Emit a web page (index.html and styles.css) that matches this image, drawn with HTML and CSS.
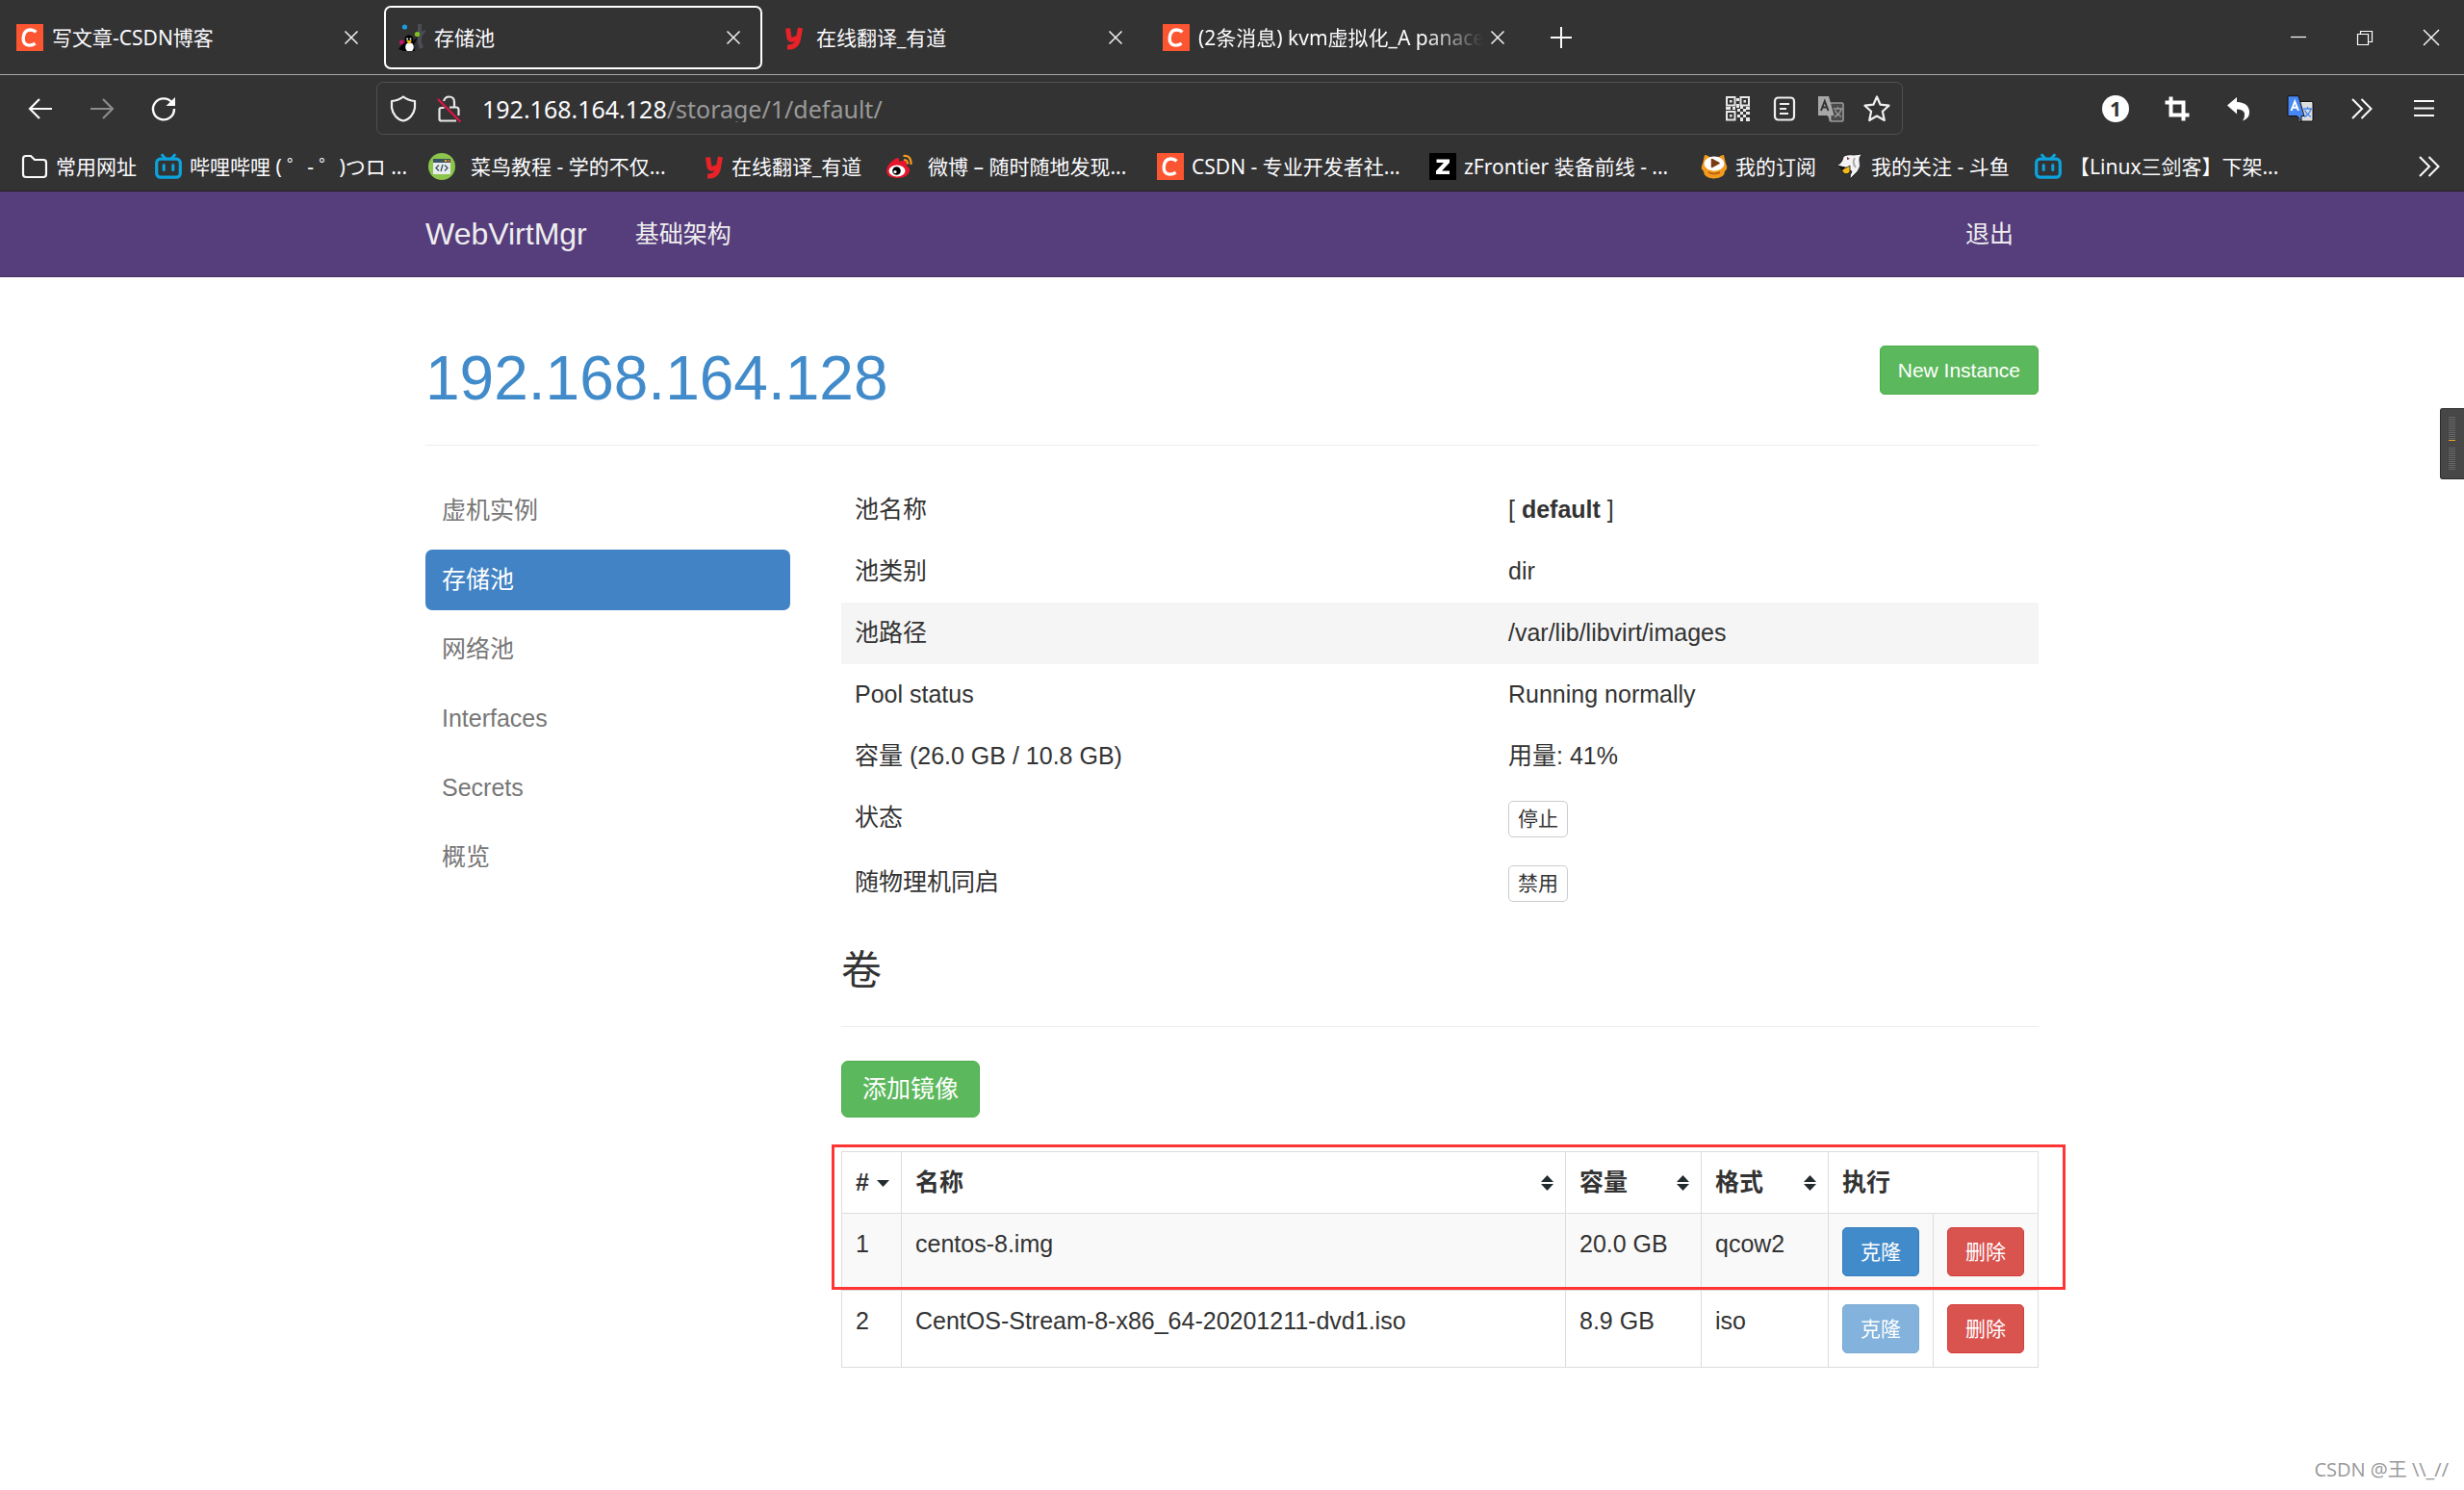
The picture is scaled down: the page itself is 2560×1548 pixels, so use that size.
FILE: index.html
```html
<!DOCTYPE html>
<html lang="zh-CN">
<head>
<meta charset="utf-8">
<meta name="viewport" content="width=device-width, initial-scale=1">
<title>存储池</title>
<link rel="stylesheet" href="styles.css">
</head>
<body>
<svg class="sprite" aria-hidden="true">
  <symbol id="i-csdn" viewBox="0 0 28 28"><rect width="28" height="28" fill="#fc5531"/><path d="M20.500 8.200C18.500 6.500 16.300 5.800 14 6C10 6.300 7.600 9.800 7.200 14.300C6.800 19.200 9.300 22 13.200 22.100C15.700 22.200 17.700 21.500 19.600 20.200" fill="none" stroke="#fff" stroke-width="3.400"/></symbol>
  <symbol id="i-youdao" viewBox="0 0 28 28"><path d="M7.500 4.500L9 14.500Q9.500 17 13.500 16L18 14M20.500 4L18.500 15Q17 24.500 7 24" fill="none" stroke="#e92228" stroke-width="5"/></symbol>
  <symbol id="i-close" viewBox="0 0 28 28"><path d="M7.500 7.500L20.500 20.500M20.500 7.500L7.500 20.500" fill="none" stroke="#f2f2f2" stroke-width="1.500"/></symbol>
  <symbol id="i-bili" viewBox="0 0 28 28"><path d="M7.500 2L11 6M20.500 2L17 6" stroke="#0ca4de" stroke-width="2.800" stroke-linecap="round"/><rect x="1.700" y="6.200" width="24.600" height="19" rx="4" fill="none" stroke="#0ca4de" stroke-width="3.200"/><path d="M9.200 12.500v5M18.800 12.500v5" stroke="#0ca4de" stroke-width="3" stroke-linecap="round"/></symbol>
  <symbol id="i-more" viewBox="0 0 28 28"><path d="M4 4L14 14L4 24M13.500 4L23.500 14L13.500 24" fill="none" stroke="#fbfbfe" stroke-width="2"/></symbol>
</svg>

<header class="browser">
  <div class="tabs" role="tablist">
    <div class="tab" role="tab">
      <svg class="ico"><use href="#i-csdn"/></svg><span class="tab-title">写文章-CSDN博客</span>
      <button class="icon-btn" aria-label="关闭"><svg class="ico"><use href="#i-close"/></svg></button>
    </div>
    <div class="tab active" role="tab" aria-selected="true">
      <svg class="ico" viewBox="0 0 28 28"><path d="M20 0h4v8l4-2v2l-4 5v6l2 5-4 2-2-6z" fill="#4b4c58"/><circle cx="6.500" cy="3" r="2.600" fill="#1b9ddb"/><circle cx="19.500" cy="10.500" r="2.600" fill="#7fc41c"/><circle cx="3.500" cy="19" r="2.600" fill="#c3146b"/><ellipse cx="11" cy="16" rx="4.500" ry="4.500" fill="#000"/><path d="M4 21L8 18H15L20 13L16 22L17 28H5L0 26Z" fill="#050505"/><ellipse cx="11.500" cy="24" rx="4.300" ry="4.800" fill="#fff"/><circle cx="9.200" cy="15.500" r="1" fill="#fff"/><circle cx="12.500" cy="15.500" r="1" fill="#fff"/><path d="M8 17h6l-3 4z" fill="#f5c20d"/></svg><span class="tab-title">存储池</span>
      <button class="icon-btn" aria-label="关闭"><svg class="ico"><use href="#i-close"/></svg></button>
    </div>
    <div class="tab" role="tab">
      <svg class="ico"><use href="#i-youdao"/></svg><span class="tab-title">在线翻译_有道</span>
      <button class="icon-btn" aria-label="关闭"><svg class="ico"><use href="#i-close"/></svg></button>
    </div>
    <div class="tab" role="tab">
      <svg class="ico"><use href="#i-csdn"/></svg><span class="tab-title fade">(2条消息) kvm虚拟化_A panace</span>
      <button class="icon-btn" aria-label="关闭"><svg class="ico"><use href="#i-close"/></svg></button>
    </div>
    <button class="icon-btn new-tab" aria-label="新建标签页"><svg class="ico" viewBox="0 0 28 28"><path d="M14 3v22M3 14h22" stroke="#fbfbfe" stroke-width="2"/></svg></button>
    <div class="window-btns">
      <button class="icon-btn" aria-label="最小化"><svg class="ico" viewBox="0 0 28 28"><path d="M6 13.500h16" stroke="#fff" stroke-width="1.200"/></svg></button>
      <button class="icon-btn" aria-label="还原"><svg class="ico" viewBox="0 0 28 28"><path d="M6.500 10.500h11v11h-11zM9.500 10V7.500h12v11H18" fill="none" stroke="#fff" stroke-width="1.200"/></svg></button>
      <button class="icon-btn" aria-label="关闭窗口"><svg class="ico" viewBox="0 0 28 28"><path d="M6 6L22 22M22 6L6 22" stroke="#fff" stroke-width="1.400"/></svg></button>
    </div>
  </div>

  <div class="toolbar">
    <div class="tool-group">
      <button class="icon-btn" aria-label="后退"><svg class="ico" viewBox="0 0 28 28"><path d="M26 14H3M13 4L3 14L13 24" fill="none" stroke="#fbfbfe" stroke-width="2.200"/></svg></button>
      <button class="icon-btn" aria-label="前进"><svg class="ico" viewBox="0 0 28 28"><path d="M2 14H25M15 4L25 14L15 24" fill="none" stroke="#8c8c8d" stroke-width="2.200"/></svg></button>
      <button class="icon-btn" aria-label="刷新"><svg class="ico" viewBox="0 0 28 28"><path d="M23 8A11 11 0 1 0 25 14" fill="none" stroke="#fbfbfe" stroke-width="2.400"/><path d="M26 2V11H16.500Z" fill="#fbfbfe"/></svg></button>
    </div>
    <div class="urlbar">
      <svg class="ico" viewBox="0 0 28 28"><path d="M14 1.500C17 4 21 5.500 26 6V13C25 20 20 25.500 14 26.500C8 25.500 3 20 2 13V6C7 5.500 11 4 14 1.500Z" fill="none" stroke="#f0f0f0" stroke-width="2.200" stroke-linejoin="round"/></svg>
      <svg class="ico" viewBox="0 0 28 28"><path d="M8 6Q9.500 1.500 13.500 1.500Q19 1.500 19 7V12.500M8.500 13H5.500Q3.500 13 3.500 15V24.500Q3.500 26.500 5.500 26.500H21M14 12.500H21Q23.500 12.500 23.500 15V21" fill="none" stroke="#e8e8e8" stroke-width="2.200"/><path d="M2 4L25.500 27.500" stroke="#e01546" stroke-width="2.200"/></svg>
      <label class="url-text"><span>192.168.164.128</span><input type="text" value="/storage/1/default/" aria-label="地址"></label>
      <svg class="ico" viewBox="0 0 28 28"><g fill="none" stroke="#e8e8e8" stroke-width="2"><path d="M2 2h8.500v8.500H2zM16.500 2H25v8.500h-8.500zM2 17h8.500v8.500H2z"/></g><path d="M5 5h2.500v2.500H5zM19.500 5H22v2.500h-2.500zM5 20h2.500v2.500H5zM12 3h3v3h-3zM12 9h3v4h-3zM1 12h5v3H1zM8 12h3v3H8zM13 14h3v3h-3zM16 11h3v3h-3zM19 14h3v3h-3zM22 12h4v3h-4zM16 17h3v3h-3zM22 17h4v3h-4zM13 20h3v3h-3zM19 20h3v3h-3zM16 23h3v4h-3zM22 23h4v4h-4z" fill="#e8e8e8"/></svg>
      <svg class="ico" viewBox="0 0 28 28"><rect x="4" y="2.500" width="20" height="23" rx="3.500" fill="none" stroke="#f0f0f0" stroke-width="2.200"/><path d="M9 9h10M9 14h7M9 19h9" stroke="#f0f0f0" stroke-width="2.200"/></svg>
      <svg class="ico" viewBox="0 0 28 28"><rect x="13" y="8" width="14" height="19" rx="1.500" fill="#4a4a4a" stroke="#9b9b9b" stroke-width="1.600"/><path d="M17 14h9M21.500 12v2M25 14.500Q23 20 18 22.500M18.500 15.500Q20.500 20 25 22.500" fill="none" stroke="#9b9b9b" stroke-width="1.400"/><path d="M1 1H12L17.500 21H14.500V27L10.500 21H1Z" fill="#a8a8a8"/><path d="M4 16L7.800 6L11.500 16M5.500 12.500h4.500" fill="none" stroke="#333" stroke-width="2"/></svg>
      <svg class="ico" viewBox="0 0 28 28"><path d="M14 1.500L17.600 9.700L26.500 10.700L19.900 16.700L21.800 26L14 21.500L6.200 26L8.100 16.700L1.500 10.700L10.400 9.700Z" fill="none" stroke="#f0f0f0" stroke-width="2.200" stroke-linejoin="round"/></svg>
    </div>
    <div class="tool-group">
      <button class="icon-btn badge" aria-label="扩展">1</button>
      <button class="icon-btn" aria-label="截图"><svg class="ico" viewBox="0 0 28 28"><path d="M7.500 1.500V20.500H26.500M1.500 7.500H20.500V26.500" fill="none" stroke="#fff" stroke-width="4"/></svg></button>
      <button class="icon-btn" aria-label="撤销"><svg class="ico" viewBox="0 0 28 28"><path d="M2 10.500L12 2V7Q25 7.500 25 18Q25 24 18 26.500Q20.500 23 20 19Q19 14.500 12 14.500V19.500Z" fill="#fff"/></svg></button>
      <button class="icon-btn" aria-label="翻译"><svg class="ico" viewBox="0 0 28 28"><rect x="12" y="6.500" width="15" height="20.500" rx="1.500" fill="#ddd" stroke="#111"/><path d="M17 14h9M21.500 12v2M25 14.500Q23 20 18 22.500M18.500 15.500Q20.500 20 25 22.500" fill="none" stroke="#4687f3" stroke-width="1.400"/><path d="M1 1.500Q1 .700 2 .700H12L18 21.500H15V27L10.500 21.500H2Q1 21.500 1 20.500Z" fill="#4687f3" stroke="#111"/><path d="M4.500 16L8.200 6.500L12 16M6 12.700h4.500" fill="none" stroke="#fff" stroke-width="2"/></svg></button>
      <button class="icon-btn" aria-label="更多工具"><svg class="ico"><use href="#i-more"/></svg></button>
      <button class="icon-btn" aria-label="菜单"><svg class="ico" viewBox="0 0 28 28"><path d="M4 6h21M4 13.500h21M4 21h21" stroke="#fbfbfe" stroke-width="2"/></svg></button>
    </div>
  </div>

  <nav class="bookmarks" aria-label="书签">
    <a href="#"><svg class="ico" viewBox="0 0 28 28"><path d="M2 6Q2 3 5 3H10L14 7H23Q26 7 26 10V22Q26 25 23 25H5Q2 25 2 22Z" fill="none" stroke="#fbfbfe" stroke-width="2.200"/></svg>常用网址</a>
    <a href="#"><svg class="ico"><use href="#i-bili"/></svg>哔哩哔哩 ( ゜- ゜)つロ ...</a>
    <a href="#"><svg class="ico" viewBox="0 0 28 28"><circle cx="14" cy="14" r="14" fill="#8cc54b"/><rect x="5" y="6" width="18" height="16" fill="#e9edef"/><rect x="5" y="6" width="18" height="4" fill="#3b5362"/><path d="M17 7h2v2h-2z" fill="#f4b400"/><path d="M20 7h2v2h-2z" fill="#e05a40"/><path d="M11 12.500L8 15.500L11 18.500M17 12.500L20 15.500L17 18.500M15 12L13 19" fill="none" stroke="#3b5362" stroke-width="1.400"/></svg><span class="spaced">菜鸟教程 - 学的不仅...</span></a>
    <a href="#"><svg class="ico narrow" viewBox="4 0 20 28"><use href="#i-youdao" width="28" height="28"/></svg>在线翻译_有道</a>
    <a href="#"><svg class="ico" viewBox="0 0 28 28"><path d="M10 6Q13 4 14 6Q14.500 8 14 9Q21 6.500 22 9.500Q22.500 11 21.500 13Q26 15 25 19Q23 26 12 26Q1 25.500 1 18.500Q1 12 10 6Z" fill="#e6162d"/><ellipse cx="12" cy="18.500" rx="8.500" ry="6" fill="#fff"/><circle cx="11.500" cy="18.500" r="4.300" fill="#000"/><circle cx="10" cy="19.500" r="1.600" fill="#fff"/><path d="M18.500 3Q27 2 26.500 12M19 7Q23.500 7 22.800 11.500" fill="none" stroke="#f59a1b" stroke-width="2.200"/></svg><span class="spaced">微博 – 随时随地发现...</span></a>
    <a href="#"><svg class="ico"><use href="#i-csdn"/></svg>CSDN - 专业开发者社...</a>
    <a href="#"><svg class="ico" viewBox="0 0 28 28"><rect width="28" height="28" fill="#000"/><path d="M7.500 6.500H21V10L13 18.500H21V22H7V18.500L15 10H7.500Z" fill="#fff"/></svg>zFrontier 装备前线 - ...</a>
    <a href="#"><svg class="ico" viewBox="0 0 28 28"><path d="M4 2Q7 2 9 4H19Q21 2 24 2L26 11Q29 16 25 19Q25 26 14 26.500Q3 26 3 19Q-1 16 2 11Z" fill="#f39a1d"/><ellipse cx="14" cy="11" rx="10.500" ry="7.500" fill="#fff"/><path d="M11.500 6.500L19 10.500L11.500 14.500Z" fill="#7b3c11" stroke="#7b3c11" stroke-width="1.500" stroke-linejoin="round"/><path d="M8 20Q14 23 20 20" fill="none" stroke="#b35a10" stroke-width="1.600"/></svg>我的订阅</a>
    <a href="#"><svg class="ico" viewBox="0 0 28 28"><path d="M7 4Q10 1 18 2L27 1Q23 4 24 8Q26 14 22 19Q18 23 14 27Q14 22 16 19L8 15L0 13Q6 11 7 4Z" fill="#f4f4f6" stroke="#111" stroke-width=".8"/><path d="M5 14Q9 17 14 13V20Q9 24 6 19Z" fill="#f2b91b" stroke="#111" stroke-width=".8"/><path d="M2 13L10 15L6 18Z" fill="#111"/><path d="M11 4L14 6L11 7Z" fill="#7b2942"/><path d="M19 5Q16 10 20 15" fill="none" stroke="#aaa" stroke-width="2"/></svg>我的关注 - 斗鱼</a>
    <a href="#"><svg class="ico"><use href="#i-bili"/></svg>【Linux三剑客】下架...</a>
    <button class="icon-btn" aria-label="更多书签"><svg class="ico"><use href="#i-more"/></svg></button>
  </nav>
</header>

<nav class="navbar">
  <div class="container navbar-inner">
    <a class="brand" href="#">WebVirtMgr</a>
    <a href="#">基础架构</a>
    <a class="logout" href="#">退出</a>
  </div>
</nav>

<div class="container">
  <div class="page-header">
    <h1><a href="#">192.168.164.128</a></h1>
    <button class="btn btn-sm btn-success">New Instance</button>
  </div>
  <div class="layout">
    <nav class="sidebar">
      <a href="#">虚机实例</a>
      <a class="active" href="#">存储池</a>
      <a href="#">网络池</a>
      <a href="#">Interfaces</a>
      <a href="#">Secrets</a>
      <a href="#">概览</a>
    </nav>
    <main>
      <table class="pool">
        <tr><th scope="row">池名称</th><td>[ <strong>default</strong> ]</td></tr>
        <tr><th scope="row">池类别</th><td>dir</td></tr>
        <tr class="hover"><th scope="row">池路径</th><td>/var/lib/libvirt/images</td></tr>
        <tr><th scope="row">Pool status</th><td>Running normally</td></tr>
        <tr><th scope="row">容量 (26.0 GB / 10.8 GB)</th><td>用量: 41%</td></tr>
        <tr><th scope="row">状态</th><td><button class="btn btn-xs">停止</button></td></tr>
        <tr><th scope="row">随物理机同启</th><td><button class="btn btn-xs">禁用</button></td></tr>
      </table>
      <h2>卷</h2>
      <button class="btn btn-success">添加镜像</button>
      <div class="volumes-wrap">
        <table class="volumes">
          <colgroup><col class="c-num"><col><col class="c-size"><col class="c-format"><col class="c-act"><col class="c-act"></colgroup>
          <thead>
            <tr>
              <th scope="col"><button class="sort">#<svg class="caret" viewBox="0 0 13 16"><path d="M0 5h13L6.500 12z"/></svg></button></th>
              <th scope="col"><button class="sort">名称<svg class="caret" viewBox="0 0 13 16"><path d="M0 7L6.500 0L13 7zM0 9h13L6.500 16z"/></svg></button></th>
              <th scope="col"><button class="sort">容量<svg class="caret" viewBox="0 0 13 16"><path d="M0 7L6.500 0L13 7zM0 9h13L6.500 16z"/></svg></button></th>
              <th scope="col"><button class="sort">格式<svg class="caret" viewBox="0 0 13 16"><path d="M0 7L6.500 0L13 7zM0 9h13L6.500 16z"/></svg></button></th>
              <th scope="colgroup" colspan="2">执行</th>
            </tr>
          </thead>
          <tbody>
            <tr><td>1</td><td>centos-8.img</td><td>20.0 GB</td><td>qcow2</td><td><button class="btn btn-sm btn-primary">克隆</button></td><td><button class="btn btn-sm btn-danger">删除</button></td></tr>
            <tr><td>2</td><td>CentOS-Stream-8-x86_64-20201211-dvd1.iso</td><td>8.9 GB</td><td>iso</td><td><button class="btn btn-sm btn-primary" disabled>克隆</button></td><td><button class="btn btn-sm btn-danger">删除</button></td></tr>
          </tbody>
        </table>
        <div class="marker"></div>
      </div>
    </main>
  </div>
</div>

<aside class="side-widget"><i class="bars"></i><i class="level"></i><i class="bars"></i></aside>
<div class="watermark">CSDN @王 \\_//</div>
</body>
</html>
```
FILE: styles.css
```css
* { box-sizing: border-box; }
body {
  position: relative;
  margin: 0;
  min-height: 100vh;
  padding-bottom: 96px;
  background: #fff;
  color: #333;
  font: 25px/35px "Liberation Sans", "Noto Sans CJK SC", sans-serif;
}
a { color: inherit; text-decoration: none; }
button { font: inherit; color: inherit; cursor: pointer; }
.sprite { display: none; }
.ico { display: block; flex: none; width: 28px; height: 28px; }
.ico.narrow { width: 20px; }
.icon-btn { flex: none; display: block; width: 28px; height: 28px; padding: 0; border: 0; background: none; }

/* Browser chrome */
.browser {
  background: #333;
  border-bottom: 1px solid #222;
  color: #fbfbfe;
  font: 21px/28px "Noto Sans", "Noto Sans CJK SC", sans-serif;
}
.tabs {
  display: flex;
  align-items: center;
  gap: 4px;
  height: 78px;
  padding-left: 2px;
  border-bottom: 1px solid #a5a5a5;
}
.tab {
  flex: 0 1 393px;
  min-width: 0;
  display: flex;
  align-items: center;
  gap: 9px;
  height: 66px;
  padding: 0 14px 0 13px;
  border: 2px solid transparent;
  border-radius: 7px;
}
.tab.active { border-color: #fff; }
.tab-title { flex: 1; min-width: 0; overflow: hidden; white-space: nowrap; }
.tab-title.fade { margin-right: -8px; -webkit-mask-image: linear-gradient(to left, transparent, #000 60px); mask-image: linear-gradient(to left, transparent, #000 60px); }
.new-tab { margin-left: 18px; }
.window-btns { display: flex; gap: 41px; margin-left: auto; padding-right: 20px; }

.toolbar { display: flex; align-items: center; gap: 207px; padding: 7px 28px; }
.tool-group { display: flex; gap: 36px; }
.badge { border-radius: 50%; background: #fff; color: #333; font-weight: 700; }
.urlbar {
  flex: 1;
  display: flex;
  align-items: center;
  gap: 20px;
  height: 55px;
  padding: 0 12px 0 13px;
  border: 1px solid #505050;
  border-radius: 7px;
}
.url-text { flex: 1; display: flex; font-size: 25px; }
.url-text input { flex: 1; min-width: 0; padding: 0; border: 0; outline: 0; background: none; color: #999; font: inherit; }

.bookmarks {
  display: grid;
  grid-template-columns: 139px 284px 287px 188px 282px 283px 282px 141px 206px 1fr auto;
  align-items: center;
  height: 51px;
  padding: 0 22px;
}
.bookmarks a { display: flex; align-items: center; gap: 8px; white-space: nowrap; }
.spaced { padding-left: 8px; }

/* Page */
.container { max-width: 1676px; margin: 0 auto; }
.navbar { background: #563d7c; border-bottom: 1px solid #463265; color: #eee; }
.navbar-inner { display: flex; align-items: center; height: 88px; padding-right: 26px; }
.brand { margin-right: 50px; font-size: 32px; }
.logout { margin-left: auto; }

.page-header {
  display: flex;
  justify-content: space-between;
  align-items: flex-start;
  padding: 71px 0 35px;
  border-bottom: 1px solid #eee;
}
h1 { margin: 0; color: #428bca; font-size: 64px; font-weight: 400; line-height: 68px; }

.btn {
  height: 59px;
  padding: 0 21px;
  border: 1px solid #ccc;
  border-radius: 7px;
  background: #fff;
  color: #333;
}
.btn-sm { height: 51px; padding: 0 18px; border-radius: 5px; font-size: 21px; }
.btn-xs { display: block; height: 38px; padding: 0 9px; border-radius: 5px; font-size: 21px; line-height: 28px; }
.btn-success { background: #5cb85c; border-color: #4cae4c; color: #fff; }
.btn-primary { background: #428bca; border-color: #357ebd; color: #fff; }
.btn-danger { background: #d9534f; border-color: #d43f3a; color: #fff; }
.btn:disabled { opacity: .65; }

.layout { display: grid; grid-template-columns: 379fr 1244fr; gap: 53px; padding-top: 35px; }
.sidebar { display: flex; flex-direction: column; gap: 9px; padding-top: 1px; color: #777; }
.sidebar a { padding: 14px 17px; border-radius: 7px; }
.sidebar .active { background: #4183c4; color: #fff; }

main { min-width: 0; }
table { width: 100%; border-collapse: collapse; table-layout: fixed; }
th, td { text-align: left; vertical-align: top; }
.pool th, .pool td { padding: 14px 14px 15px; font-weight: 400; }
.pool th { width: 679px; }
.pool .hover { background: #f5f5f5; }

h2 {
  margin: 34px 0 35px;
  padding-bottom: 34px;
  border-bottom: 1px solid #eee;
  font-size: 42px;
  font-weight: 400;
  line-height: 46px;
}
.volumes-wrap { position: relative; margin-top: 35px; }
.volumes th, .volumes td { padding: 14px; border: 1px solid #ddd; }
.volumes th { padding-right: 12px; }
.volumes tbody tr:first-child { background: #f9f9f9; }
.volumes .btn { display: block; width: 100%; padding: 0; }
.c-num { width: 62px; }
.c-size { width: 141px; }
.c-format { width: 132px; }
.c-act { width: 109px; }
.sort { display: flex; justify-content: space-between; align-items: center; width: 100%; padding: 0; border: 0; background: none; font-weight: 700; }
.caret { width: 13px; height: 16px; fill: #222b2d; }
.marker { position: absolute; top: -7px; left: -10px; right: -28px; height: 151px; border: 3px solid #ff3535; pointer-events: none; }

.side-widget {
  position: absolute;
  top: 424px;
  right: 0;
  width: 25px;
  height: 74px;
  padding: 8px;
  border: 1px solid #2b2b2b;
  border-right: 0;
  border-radius: 3px 0 0 3px;
  background: #474747;
}
.side-widget i { display: block; width: 7px; }
.bars { height: 23px; background: repeating-linear-gradient(#666 0 1px, transparent 1px 2px); }
.level { height: 1px; margin: 1px 0 7px; background: #f5a32b; }
.watermark {
  position: absolute;
  right: 16px;
  bottom: 7px;
  color: #999;
  font: 20px/28px "Open Sans", "Noto Sans CJK SC", sans-serif;
}
```
